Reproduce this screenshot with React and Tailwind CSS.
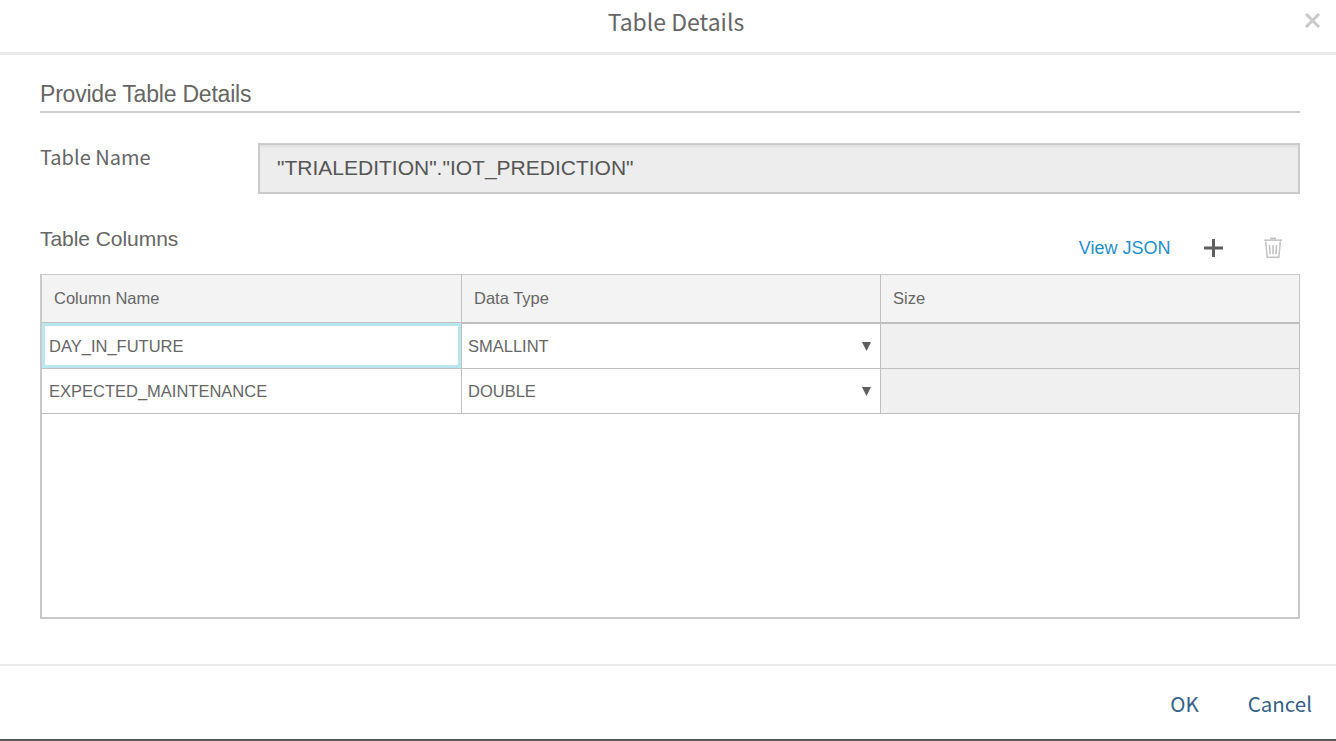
const rows = [
  { name: 'DAY_IN_FUTURE', type: 'SMALLINT', focused: true },
  { name: 'EXPECTED_MAINTENANCE', type: 'DOUBLE', focused: false },
];

const humanist = "font-['Noto_Sans_CJK_SC',sans-serif]";

function TrashIcon() {
  return (
    <svg width="20" height="22" viewBox="0 0 20 22" fill="none" stroke="#c3c3c3">
      <path d="M7 1.5h6" strokeWidth="2" />
      <path d="M1 3.2h18" strokeWidth="1.5" />
      <path d="M2.7 4.5L4.2 20.3h11.6L17.3 4.5" strokeWidth="1.5" />
      <path d="M6.5 8l.5 9.3M10 8v9.3M13.5 8l-.5 9.3" strokeWidth="1.6" />
    </svg>
  );
}

function Row({ row }) {
  return (
    <div className="grid h-[45px] grid-cols-[420px_419px_1fr] text-[16.5px] text-[#666]">
      <div className="h-[45px] border-b border-r border-[#bfbfbf]">
        <div
          className={
            row.focused
              ? '-mt-px h-[45px] border-[3px] border-[#b8e7ef] pl-1 leading-[41px]'
              : 'h-[44px] pl-[7px] leading-[45px]'
          }
        >
          {row.name}
        </div>
      </div>
      <div className="flex h-[45px] items-center justify-between border-b border-r border-[#bfbfbf] pl-1.5 pr-[9px] leading-[44px]">
        <span>{row.type}</span>
        <svg width="9" height="9" viewBox="0 0 9 9">
          <path d="M0 0h9L4.5 9z" fill="#5e5e5e" />
        </svg>
      </div>
      <div className="h-[45px] border-b border-r border-[#bfbfbf] bg-[#f0f0f0]" />
    </div>
  );
}

export default function App() {
  return (
    <div className="flex h-[741px] w-[1336px] flex-col overflow-hidden border-b-2 border-[#555] bg-white font-['Liberation_Sans',Arial,sans-serif] text-[#666]">
      <header className="grid h-[55px] shrink-0 grid-cols-[1fr_auto_1fr] border-b-[3px] border-[#eaeaea]">
        <h1 className={`${humanist} col-start-2 pl-4 text-[23px] leading-[43px]`}>Table Details</h1>
        <button aria-label="Close" className="mr-4 mt-[13px] h-[15px] justify-self-end">
          <svg width="15" height="15" viewBox="0 0 15 15" stroke="#c9c9c9" strokeWidth="3">
            <path d="M1 1l13 13M14 1L1 14" />
          </svg>
        </button>
      </header>

      <main className="flex h-[609px] shrink-0 flex-col px-[40px] pr-[36px]">
        <h2 className="mt-[23px] h-[35px] w-[1260px] border-b-2 border-[#cbcbcb] text-[23px] leading-[32px] tracking-[-0.21px]">
          Provide Table Details
        </h2>
        <div className="mt-[30px] flex h-[51px] w-[1260px]">
          <div className={`${humanist} w-[218px] text-[20px] leading-[28px]`}>Table Name</div>
          <div className="flex-1 border-2 border-[#cbcbcb] bg-[#ededed] pl-[17px] text-[21px] leading-[46px] text-[#555] shadow-[inset_0_2px_2px_rgba(0,0,0,0.06)]">
            "TRIALEDITION"."IOT_PREDICTION"
          </div>
        </div>
        <div className="flex h-[80px] w-[1260px] justify-between">
          <div className="mt-[30px] text-[21px] leading-[30px] tracking-[-0.05px]">Table Columns</div>
          <div className="mt-[42px] flex h-6 items-center pr-[17px]">
            <span className="mr-[33px] text-[18px] leading-6 text-[#1e8fcd]">View JSON</span>
            <svg width="19" height="18" viewBox="0 0 19 18" stroke="#5f5f5f" strokeWidth="3" className="mr-[40.5px]">
              <path d="M0 9h19M9.5 0v18" />
            </svg>
            <TrashIcon />
          </div>
        </div>
        <div className="flex h-[345px] w-[1260px] flex-col border-l-2 border-[#c9c9c9]">
          <div className="grid h-[50px] grid-cols-[420px_419px_1fr] border-b-2 border-t border-b-[#bfbfbf] border-t-[#c9c9c9] bg-[#f3f3f3] text-[16.5px] leading-[47px]">
            <div className="border-r border-[#bfbfbf] pl-3">Column Name</div>
            <div className="border-r border-[#bfbfbf] pl-3">Data Type</div>
            <div className="border-r border-[#c9c9c9] pl-3">Size</div>
          </div>
          {rows.map((row) => (
            <Row key={row.name} row={row} />
          ))}
          <div className="flex-1 border-b-2 border-r-2 border-[#c9c9c9]" />
        </div>
      </main>

      <footer className={`${humanist} flex flex-1 items-start justify-end gap-[49px] border-t-2 border-[#eaeaea] pr-6 pt-[22px] text-[20.5px] leading-[30px] text-[#346187]`}>
        <button>OK</button>
        <button>Cancel</button>
      </footer>
    </div>
  );
}
